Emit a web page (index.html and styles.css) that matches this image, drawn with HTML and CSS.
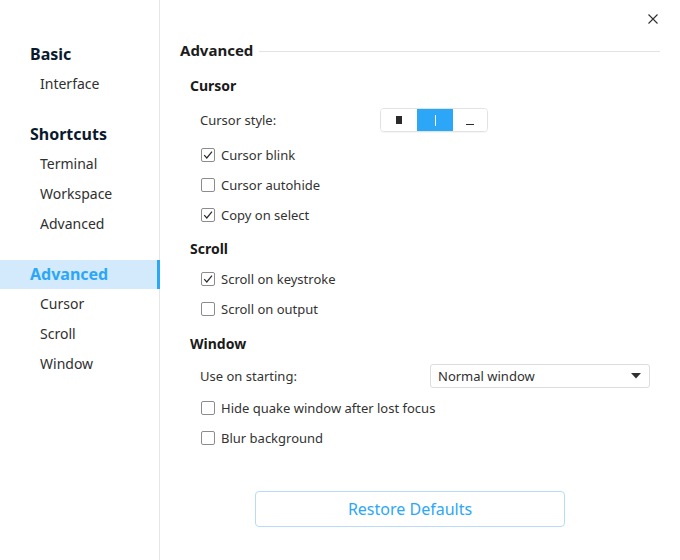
FILE: index.html
```html
<!DOCTYPE html>
<html>
<head>
<meta charset="utf-8">
<link rel="stylesheet" href="styles.css">
</head>
<body>
<div class="window">
  <nav class="sidebar">
    <div class="group">
      <div class="group-title">Basic</div>
      <div class="nav-item">Interface</div>
    </div>
    <div class="group">
      <div class="group-title">Shortcuts</div>
      <div class="nav-item">Terminal</div>
      <div class="nav-item">Workspace</div>
      <div class="nav-item">Advanced</div>
    </div>
    <div class="group">
      <div class="group-title selected">Advanced</div>
      <div class="nav-item">Cursor</div>
      <div class="nav-item">Scroll</div>
      <div class="nav-item">Window</div>
    </div>
  </nav>
  <main class="content">
    <button class="close" aria-label="Close">
      <svg width="10" height="10" viewBox="0 0 10 10"><path d="M0.5 0.5 L9.5 9.5 M9.5 0.5 L0.5 9.5" stroke="#303030" stroke-width="1.1" fill="none"/></svg>
    </button>
    <div class="page-header">
      <span class="page-title">Advanced</span>
      <span class="rule"></span>
    </div>

    <section class="section">
      <div class="section-title">Cursor</div>
      <div class="row row-style">
        <span class="label">Cursor style:</span>
        <div class="seg">
          <div class="seg-btn"><span class="block-cursor"></span></div>
          <div class="seg-btn active"><span class="ibeam-cursor"></span></div>
          <div class="seg-btn"><span class="under-cursor"></span></div>
        </div>
      </div>
      <div class="row check"><span class="box checked"><svg width="14" height="14" viewBox="0 0 14 14"><path d="M3.2 7.2 L5.8 10 L11 3.6" stroke="#2b2b2b" stroke-width="1.2" fill="none"/></svg></span>Cursor blink</div>
      <div class="row check"><span class="box"></span>Cursor autohide</div>
      <div class="row check"><span class="box checked"><svg width="14" height="14" viewBox="0 0 14 14"><path d="M3.2 7.2 L5.8 10 L11 3.6" stroke="#2b2b2b" stroke-width="1.2" fill="none"/></svg></span>Copy on select</div>
    </section>

    <section class="section s-scroll">
      <div class="section-title">Scroll</div>
      <div class="row check"><span class="box checked"><svg width="14" height="14" viewBox="0 0 14 14"><path d="M3.2 7.2 L5.8 10 L11 3.6" stroke="#2b2b2b" stroke-width="1.2" fill="none"/></svg></span>Scroll on keystroke</div>
      <div class="row check"><span class="box"></span>Scroll on output</div>
    </section>

    <section class="section s-window">
      <div class="section-title">Window</div>
      <div class="row row-select">
        <span class="label">Use on starting:</span>
        <div class="select">
          <span>Normal window</span>
          <svg width="10" height="6" viewBox="0 0 10 6"><path d="M0 0 L10 0 L5 5.5 Z" fill="#303030"/></svg>
        </div>
      </div>
      <div class="row check"><span class="box"></span>Hide quake window after lost focus</div>
      <div class="row check"><span class="box"></span>Blur background</div>
    </section>

    <div class="footer">
      <button class="restore">Restore Defaults</button>
    </div>
  </main>
</div>
</body>
</html>
```

FILE: styles.css
```css
* { box-sizing: border-box; }
html, body {
  margin: 0;
  padding: 0;
  width: 680px;
  height: 560px;
  background: #ffffff;
  font-family: "Noto Sans", "Open Sans", sans-serif;
  overflow: hidden;
}
.window {
  display: flex;
  width: 680px;
  height: 560px;
  background: #ffffff;
}
.sidebar {
  width: 160px;
  flex: none;
  border-right: 1px solid #e6e6e6;
  padding-top: 39px;
  display: flex;
  flex-direction: column;
  gap: 20px;
}
.group { display: flex; flex-direction: column; }
.group-title {
  height: 30px;
  line-height: 30px;
  padding-left: 30px;
  font-size: 16px;
  font-weight: 700;
  color: #0a1a2e;
}
.group-title.selected {
  color: #2ca7f8;
  background: #d3eafc;
  border-right: 3px solid #2ca7f8;
  margin-right: -1px;
  height: 29px;
  line-height: 29px;
  margin-top: 1px;
}
.nav-item {
  height: 30px;
  line-height: 30px;
  padding-left: 40px;
  font-size: 14px;
  color: #303030;
}
.content {
  flex: 1;
  position: relative;
  padding: 40px 20px 0 20px;
  display: flex;
  flex-direction: column;
}
.close {
  position: absolute;
  top: 14px;
  right: 22px;
  width: 10px;
  height: 10px;
  padding: 0;
  border: none;
  background: none;
  display: flex;
}
.page-header {
  display: flex;
  align-items: center;
  height: 20px;
}
.page-title {
  font-size: 15px;
  font-weight: 700;
  color: #1c1c1c;
}
.rule {
  flex: 1;
  height: 1px;
  background: #e3e3e3;
  margin-left: 6px;
  margin-top: 2px;
}
.section {
  display: flex;
  flex-direction: column;
  padding-left: 10px;
}
.section:first-of-type { margin-top: 11px; }
.s-scroll { margin-top: 4px; }
.s-window { margin-top: 5px; }
.section-title {
  height: 30px;
  line-height: 30px;
  font-size: 14px;
  font-weight: 700;
  color: #1a1a1a;
}
.row {
  display: flex;
  align-items: center;
  height: 30px;
  padding-left: 10px;
  font-size: 13px;
  color: #333333;
}
.row-style { height: 32px; margin-top: 3px; margin-bottom: 4px; }
.label { width: 180px; flex: none; }
.seg {
  display: flex;
  height: 24px;
  border: 1px solid #e2e2e2;
  border-radius: 4px;
  overflow: hidden;
  box-shadow: 0 1px 1px rgba(0,0,0,0.04);
}
.seg-btn {
  width: 36px;
  height: 100%;
  display: flex;
  align-items: center;
  justify-content: center;
  background: #ffffff;
}
.seg-btn:last-child { width: 34px; }
.seg-btn.active { background: #2ca7f8; }
.block-cursor {
  width: 6px;
  height: 8px;
  background: #2a2a2a;
}
.ibeam-cursor {
  width: 1px;
  height: 11px;
  background: #ffffff;
}
.under-cursor {
  width: 8px;
  height: 1px;
  background: #2a2a2a;
  margin-top: 9px;
}
.check { gap: 6px; }
.box {
  width: 14px;
  height: 14px;
  flex: none;
  border: 1px solid #8c8c8c;
  border-radius: 2px;
  margin-left: 1px;
  display: flex;
  align-items: center;
  justify-content: center;
  position: relative;
}
.box svg { position: absolute; left: -1px; top: -1px; }
.row-select { height: 30px; margin-top: 2px; margin-bottom: 2px; }
.row-select .label { width: 230px; }
.select {
  width: 220px;
  height: 24px;
  border: 1px solid #dddddd;
  border-radius: 3px;
  display: flex;
  align-items: center;
  justify-content: space-between;
  padding: 0 8px 0 7px;
  font-size: 13px;
  color: #303030;
  background: #ffffff;
}
.footer {
  display: flex;
  padding-left: 75px;
  margin-top: 38px;
}
.restore {
  width: 310px;
  height: 36px;
  border: 1px solid #b7dcf7;
  border-radius: 4px;
  background: #ffffff;
  color: #2ca7f8;
  font-family: "Noto Sans", "Open Sans", sans-serif;
  font-size: 16px;
  padding: 0;
}
```
